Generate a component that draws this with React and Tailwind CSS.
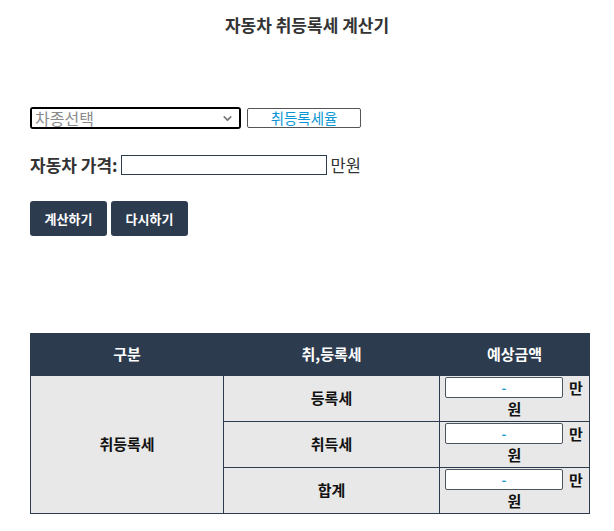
import React, { useState } from "react";
import { ChevronDown } from "lucide-react";

const font = { fontFamily: '"Noto Sans CJK KR", "Noto Sans", sans-serif' };

const AmountCell = ({ value }) => (
  <td className="border border-[#2c3b4e] px-[5px] pt-[1px] align-top">
    <div className="flex items-center gap-[6px]">
      <input
        readOnly
        value={value}
        className="w-[118px] h-[21px] rounded-[2px] border border-[#4a5560] bg-white text-center text-[13px] leading-none text-[#1a9ad6] outline-none"
      />
      <span className="text-[15px] font-bold leading-[20px]">만</span>
    </div>
    <div className="text-center text-[15px] font-bold leading-[22px]">원</div>
  </td>
);

export default function App() {
  const [price, setPrice] = useState("");

  return (
    <div className="w-[614px] min-h-[531px] bg-white text-[#222]" style={font}>
      <h1 className="pt-[14px] text-center text-[17px] font-bold leading-[22px] text-[#333]">
        자동차 취등록세 계산기
      </h1>

      <div className="mt-[71px] ml-[30px] flex items-center gap-[6px]">
        <div className="relative w-[211px] h-[22px] overflow-hidden rounded-[3px] border-2 border-black bg-white">
          <select className="block w-full h-[18px] appearance-none bg-white pl-[3px] py-0 text-[16px] leading-[18px] text-[#8a8a8a] outline-none">
            <option>차종선택</option>
          </select>
          <ChevronDown className="pointer-events-none absolute right-[5px] top-[3px] w-[13px] h-[13px] text-[#777]" strokeWidth={3} />
        </div>
        <button className="w-[114px] h-[20px] rounded-[2px] border border-[#555] bg-white text-[14.5px] leading-none text-[#0a96d4]">
          취등록세율
        </button>
      </div>

      <div className="mt-[26px] ml-[30px] flex items-center gap-[3px]">
        <span className="text-[17px] font-bold leading-[20px] text-[#333]">자동차 가격:</span>
        <input
          value={price}
          onChange={(e) => setPrice(e.target.value)}
          className="w-[206px] h-[20px] border border-[#2c3b4e] bg-white text-[14px] outline-none"
        />
        <span className="ml-[1px] text-[16.5px] leading-[20px] text-[#333]">만원</span>
      </div>

      <div className="mt-[26px] ml-[30px] flex gap-[4px]">
        <button className="w-[77px] h-[35px] rounded-[3px] bg-[#2c3b4e] text-[13px] font-bold text-white">
          계산하기
        </button>
        <button className="w-[77px] h-[35px] rounded-[3px] bg-[#2c3b4e] text-[13px] font-bold text-white">
          다시하기
        </button>
      </div>

      <table className="mt-[97px] ml-[30px] w-[559px] table-fixed border-collapse text-[15px] font-bold">
        <colgroup>
          <col className="w-[193px]" />
          <col className="w-[216px]" />
          <col className="w-[150px]" />
        </colgroup>
        <thead>
          <tr className="h-[42px] bg-[#2c3b4e] text-white">
            <th className="border border-[#2c3b4e]">구분</th>
            <th className="border border-[#2c3b4e]">취,등록세</th>
            <th className="border border-[#2c3b4e]">예상금액</th>
          </tr>
        </thead>
        <tbody className="bg-[#e8e8e8] text-[#111]">
          <tr className="h-[46px]">
            <td rowSpan={3} className="border border-[#2c3b4e] text-center">취등록세</td>
            <td className="border border-[#2c3b4e] text-center">등록세</td>
            <AmountCell value="-" />
          </tr>
          <tr className="h-[46px]">
            <td className="border border-[#2c3b4e] text-center">취득세</td>
            <AmountCell value="-" />
          </tr>
          <tr className="h-[46px]">
            <td className="border border-[#2c3b4e] text-center">합계</td>
            <AmountCell value="-" />
          </tr>
        </tbody>
      </table>
    </div>
  );
}
